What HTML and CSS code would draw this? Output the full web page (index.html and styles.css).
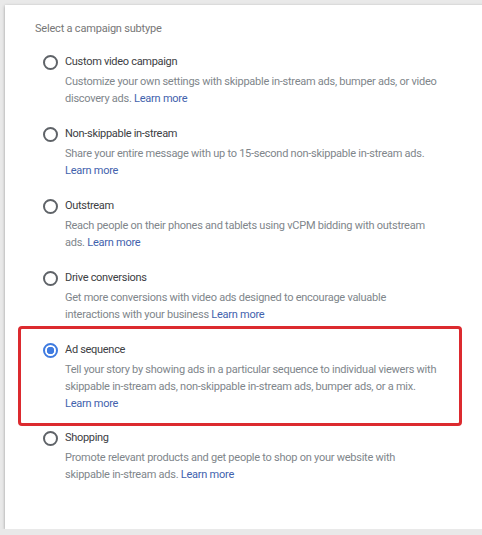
FILE: index.html
```html
<!DOCTYPE html>
<html lang="en">
<head>
    <meta charset="UTF-8">
    <meta name="viewport" content="width=device-width, initial-scale=1.0">
    <title>Campaign subtype</title>
    <link rel="stylesheet" href="styles.css">
</head>
<body>
    <div class="card">
        <div class="heading">Select a campaign subtype</div>
        <ul class="options">
            <li class="option">
                <span class="radio"></span>
                <div class="text">
                    <div class="title">Custom video campaign</div>
                    <div class="desc">Customize your own settings with skippable in-stream ads, bumper ads, or video discovery ads. <a href="#">Learn more</a></div>
                </div>
            </li>
            <li class="option">
                <span class="radio"></span>
                <div class="text">
                    <div class="title">Non-skippable in-stream</div>
                    <div class="desc">Share your entire message with up to 15-second non-skippable in-stream ads. <a href="#">Learn more</a></div>
                </div>
            </li>
            <li class="option">
                <span class="radio"></span>
                <div class="text">
                    <div class="title">Outstream</div>
                    <div class="desc">Reach people on their phones and tablets using vCPM bidding with outstream ads. <a href="#">Learn more</a></div>
                </div>
            </li>
            <li class="option">
                <span class="radio"></span>
                <div class="text">
                    <div class="title">Drive conversions</div>
                    <div class="desc">Get more conversions with video ads designed to encourage valuable interactions with your business <a href="#">Learn more</a></div>
                </div>
            </li>
            <li class="option selected">
                <span class="radio checked"></span>
                <div class="text">
                    <div class="title">Ad sequence</div>
                    <div class="desc">Tell your story by showing ads in a particular sequence to individual viewers with skippable in-stream ads, non-skippable in-stream ads, bumper ads, or a mix. <a href="#">Learn more</a></div>
                </div>
            </li>
            <li class="option">
                <span class="radio"></span>
                <div class="text">
                    <div class="title">Shopping</div>
                    <div class="desc">Promote relevant products and get people to shop on your website with skippable in-stream ads. <a href="#">Learn more</a></div>
                </div>
            </li>
        </ul>
    </div>
</body>
</html>
```

FILE: styles.css
```css
*{
    margin: 0px;
    padding: 0px;
    box-sizing: border-box;
}
body{
    background-color: #e9e9e9;
    font-family: Roboto, "Liberation Sans", sans-serif;
    overflow: hidden;
}
.card{
    margin: 5px 0 0 5px;
    width: 500px;
    height: 524px;
    background-color: #fff;
    box-shadow: 0 1px 3px rgba(0, 0, 0, .35);
    padding: 14px 0 0 30px;
}
.heading{
    font-size: 11px;
    letter-spacing: -0.2px;
    line-height: 20px;
    color: #777;
}
.options{
    list-style: none;
    display: flex;
    flex-direction: column;
    gap: 17px;
    margin: 13px 0 0 8px;
    width: 402px;
}
.option{
    display: flex;
    gap: 7px;
}
.option.selected{
    margin: -14px 0 -15px -25px;
    width: 444px;
    border: 3px solid #dc2a2f;
    border-radius: 4px;
    padding: 11px 17px 11px 22px;
}
.radio{
    flex: none;
    width: 15px;
    height: 15px;
    margin-top: 3px;
    border: 2px solid #5f6368;
    border-radius: 50%;
}
.radio.checked{
    border-color: #3f7be0;
    background: radial-gradient(circle, #3f7be0 0, #3f7be0 3.5px, #fff 4px);
}
.text{
    width: 374px;
}
.title{
    font-size: 11px;
    letter-spacing: -0.3px;
    line-height: 20px;
    color: #3c4043;
}
.desc{
    margin-top: 1px;
    font-size: 11px;
    letter-spacing: -0.25px;
    line-height: 17px;
    color: #80868b;
}
.desc a{
    color: #4262ad;
    text-decoration: none;
}
```
